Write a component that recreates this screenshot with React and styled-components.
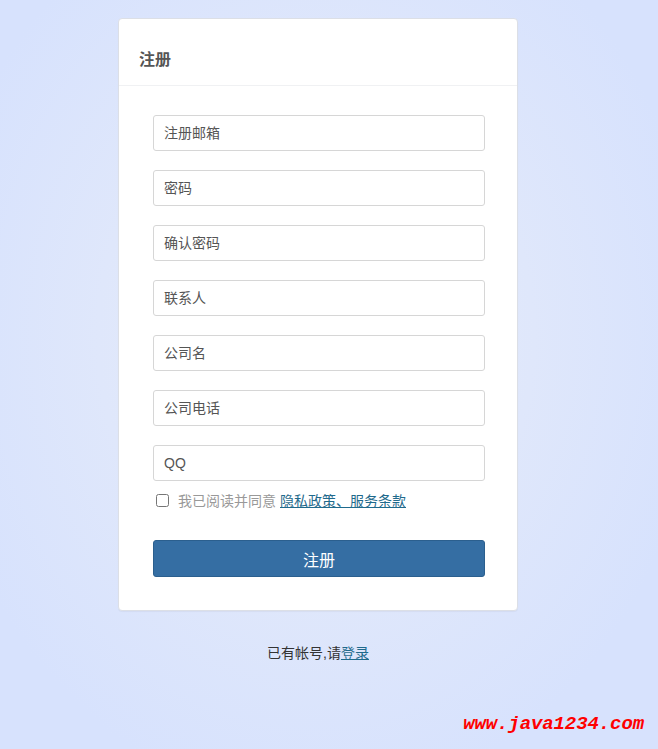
import styled, { createGlobalStyle } from 'styled-components';

const GlobalStyle = createGlobalStyle`
  html, body {
    margin: 0;
    padding: 0;
  }

  body {
    min-height: 749px;
    background: radial-gradient(ellipse at 48% 45%, #e7edf9 0%, #dfe7fb 45%, #d7e2fd 80%);
    font-family: "Liberation Sans", "Noto Sans CJK SC", sans-serif;
    font-size: 14px;
    color: #333;
  }
`;

const Page = styled.div`
  position: relative;
  height: 749px;
  padding: 18px 0 0 118px;
  box-sizing: border-box;
`;

const Column = styled.div`
  width: 400px;
  display: flex;
  flex-direction: column;
  align-items: center;
`;

const Panel = styled.div`
  width: 100%;
  box-sizing: border-box;
  background: #fff;
  border: 1px solid #dcdfe6;
  border-radius: 4px;
  box-shadow: 0 1px 1px rgba(0, 0, 0, 0.04);
`;

const PanelHeading = styled.div`
  height: 67px;
  box-sizing: border-box;
  padding: 30px 20px 0;
  border-bottom: 1px solid #f0f1f3;

  & h3 {
    margin: 0;
    font-size: 16px;
    line-height: 22px;
    font-weight: bold;
    color: #555;
  }
`;

const Form = styled.form`
  display: flex;
  flex-direction: column;
  gap: 19px;
  padding: 29px 32px 33px 34px;
`;

const Field = styled.input`
  height: 36px;
  width: 100%;
  box-sizing: border-box;
  padding: 0 10px;
  border: 1px solid #d6d6d6;
  border-radius: 3px;
  font-family: inherit;
  font-size: 14px;
  color: #555;
  outline: none;

  &::placeholder {
    color: #555;
  }
`;

const AgreeRow = styled.label`
  display: flex;
  align-items: center;
  gap: 9px;
  margin: -10px 0 0 3px;
  height: 20px;
  color: #999;
  font-size: 14px;

  & input {
    margin: 0;
    width: 13px;
    height: 13px;
  }

  & a {
    color: #1f6a8c;
    text-decoration: underline;
    margin-left: -5px;
  }
`;

const Submit = styled.button`
  margin-top: 11px;
  height: 37px;
  width: 100%;
  border: 1px solid #2b5f8e;
  border-radius: 3px;
  background: #356ea3;
  color: #fff;
  font-family: inherit;
  font-size: 16px;
  cursor: pointer;
`;

const LoginHint = styled.p`
  margin: 31px 0 0;
  font-size: 14px;
  color: #333;

  & a {
    color: #1f6a8c;
    text-decoration: underline;
  }
`;

const Watermark = styled.span`
  position: absolute;
  right: 14px;
  bottom: 14px;
  font-family: "Liberation Mono", monospace;
  font-size: 19px;
  font-weight: bold;
  font-style: italic;
  color: #f00;
  letter-spacing: -0.1px;
`;

const fields = ['注册邮箱', '密码', '确认密码', '联系人', '公司名', '公司电话', 'QQ'];

const App = () => {
  return (
    <>
      <GlobalStyle />
      <Page>
        <Column>
          <Panel>
            <PanelHeading>
              <h3>注册</h3>
            </PanelHeading>
            <Form onSubmit={(e) => e.preventDefault()}>
              {fields.map((f) => (
                <Field key={f} type="text" placeholder={f} />
              ))}
              <AgreeRow>
                <input type="checkbox" />
                <span>我已阅读并同意</span>
                <a href="/">隐私政策、服务条款</a>
              </AgreeRow>
              <Submit type="submit">注册</Submit>
            </Form>
          </Panel>
          <LoginHint>
            已有帐号,请<a href="/">登录</a>
          </LoginHint>
        </Column>
        <Watermark>www.java1234.com</Watermark>
      </Page>
    </>
  );
};

export default App;
